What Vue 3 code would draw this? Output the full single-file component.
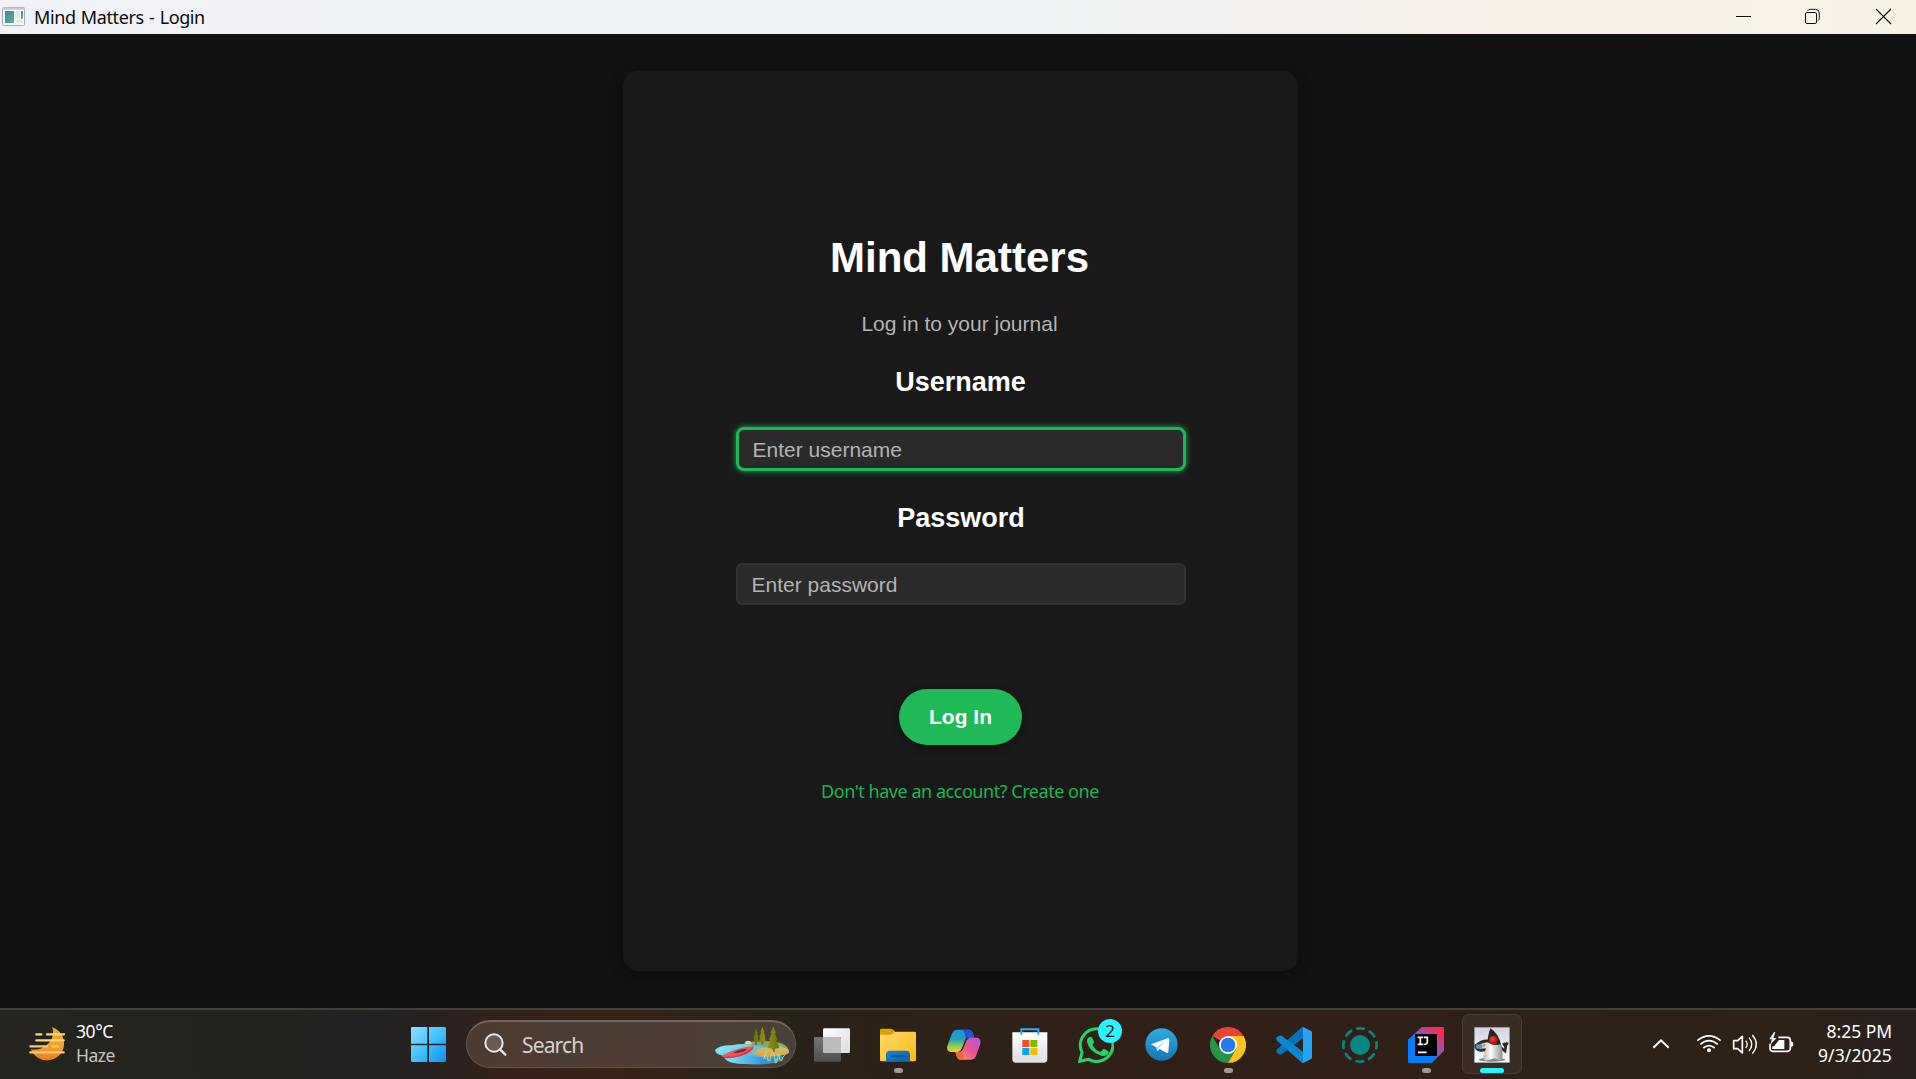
<script setup>
const title = 'Mind Matters - Login'
</script>

<template>
  <div class="screen">
    <header class="titlebar">
      <svg class="app-icon" width="23" height="19" viewBox="0 0 69 57">
        <defs><linearGradient id="ai" x1="0" y1="0" x2="1" y2="1"><stop offset="0" stop-color="#4583b0" /><stop offset="1" stop-color="#55b087" /></linearGradient></defs>
        <rect x="1.500" y="1.500" width="66" height="54" rx="3" fill="#f7f7f7" stroke="#a6adb8" stroke-width="3" />
        <path d="M2 2h65v6H2z" fill="#c3cad4" />
        <path d="M9 12h27v36H9z" fill="url(#ai)" />
        <path d="M41 12h12v22H41zM41 38h22v10H41z" fill="#e6e8e6" />
        <path d="M57 12h6v23h-6z" fill="url(#ai)" />
      </svg>
      <span class="window-title">{{ title }}</span>
      <div class="window-controls">
        <svg width="182" height="34" viewBox="0 0 546 102" fill="none" stroke="#111" stroke-width="3">
          <path d="M18 49.500h45" />
          <rect x="226.500" y="37.500" width="33" height="33" rx="4" />
          <path d="M233 32q2-4 8-4h15q12 0 12 12v13q0 7-4 9" />
          <path d="M438 27l45 45M483 27l-45 45" stroke-width="3.600" />
        </svg>
      </div>
    </header>

    <main class="workspace">
      <section class="card">
        <h1>Mind Matters</h1>
        <p class="subtitle">Log in to your journal</p>
        <div class="label user-label">Username</div>
        <div class="field focused"><span>Enter username</span></div>
        <div class="label pass-label">Password</div>
        <div class="field plain"><span>Enter password</span></div>
        <button class="login">Log In</button>
        <a class="signup">Don't have an account? Create one</a>
      </section>
    </main>

    <footer class="taskbar">
      <div class="weather">
        <svg width="36" height="34" viewBox="0 0 108 102">
          <defs><linearGradient id="sun" x1="0" y1="0" x2="0" y2="1"><stop offset="0" stop-color="#eba936" /><stop offset=".55" stop-color="#f3a52c" /><stop offset="1" stop-color="#ee7a1d" /></linearGradient></defs>
          <path d="M69 0c21 8 36 25 36 49a51 50 0 0 1-99 18c14 2 26 0 38-7 24-14 34-38 25-60z" fill="url(#sun)" />
          <g stroke="#f9d978" stroke-width="7" stroke-linecap="round"><path d="M22 22h15M54 22h51M22 40h82" /><path d="M4 58h51M71 58h15M4 76h100" stroke="#f3c777" /></g>
        </svg>
        <div class="weather-text"><span class="temp">30°C</span><span class="haze">Haze</span></div>
      </div>

      <div class="tasks">
        <div class="slot start">
          <svg width="35" height="35" viewBox="0 0 105 105">
            <defs><linearGradient id="win" gradientUnits="userSpaceOnUse" x1="0" y1="0" x2="105" y2="105"><stop offset="0" stop-color="#8ee0ff" /><stop offset=".5" stop-color="#41c3ff" /><stop offset="1" stop-color="#0a91fb" /></linearGradient></defs>
            <path d="M4 0h45v50H0V4q0-4 4-4zM54 0h47q4 0 4 4v46H54zM0 55h49v50H4q-4 0-4-4zM54 55h51v46q0 4-4 4H54z" fill="url(#win)" />
          </svg>
        </div>
        <div class="search">
          <svg width="23" height="24" viewBox="0 0 69 72" fill="none" stroke="#e8e8ea">
            <circle cx="30" cy="30" r="26" stroke-width="6" fill="#6a5a52" /><path d="M48 49l16 16" stroke-width="7" stroke-linecap="round" />
          </svg>
          <span>Search</span>
          <svg class="scene" width="76" height="40" viewBox="972 72 228 120">
            <defs>
              <linearGradient id="lake" x1="0" y1="0" x2="1" y2=".6"><stop offset="0" stop-color="#8df2f2" /><stop offset=".5" stop-color="#66c9f0" /><stop offset="1" stop-color="#2a93dd" /></linearGradient>
              <linearGradient id="lake2" x1="0" y1="0" x2="1" y2="0"><stop offset="0" stop-color="#7fe6f5" /><stop offset="1" stop-color="#2a8fd8" /></linearGradient>
              <linearGradient id="land" x1="0" y1="0" x2="0" y2="1"><stop offset="0" stop-color="#c9c56b" /><stop offset="1" stop-color="#e0a04c" /></linearGradient>
              <linearGradient id="fir"><stop offset="0" stop-color="#55700f" /><stop offset=".5" stop-color="#a8920f" /><stop offset="1" stop-color="#5c7010" /></linearGradient>
            </defs>
            <path d="M975 147q12-15 50-14 30-8 78-1l50 8 24 25q2 21-45 24-90 5-122-11-11-6 1-12-35-3-36-19z" fill="url(#lake)" />
            <path d="M1010 178q45-18 120-7-4 16-50 18-52 2-70-11z" fill="url(#lake2)" />
            <path d="M1063 128q5-12 20-6 60-5 90 5 22 7 25 27-8 9-30 8-5-22-60-27-32-1-45-7z" fill="#7fb06a" />
            <path d="M1063 127q5-11 18-6l4 7q-10 4-22-1z" fill="#cfe0b8" />
            <path d="M1088 158q10-16 43-20 35-8 64 8 5 11-8 14-20 6-37 6-26 7-62-8z" fill="url(#land)" />
            <path d="M1096 132h5v-18h-5zM1114 130h6v-20h-6zM1147 152h7v-22h-7z" fill="#8a5125" />
            <path d="M1098 82l5 14-2 1 4 12-2 1 3 12h-16l3-12-2-1 4-12-2-1zM1117 77l6 16-2 1 5 14-2 1 4 15h-22l4-15-2-1 5-14-2-1zM1150 76l8 19-3 2 8 20-4 2 9 22q-17 5-36 0l9-22-4-2 8-20-3-2z" fill="url(#fir)" />
            <path d="M997 168q-2-5 8-9 40-20 86-24 0 17-42 31-34 9-52 2z" fill="#f25457" />
            <path d="M1028 157q22-15 43-13-8 12-43 13z" fill="#6b2c3d" /><path d="M997 168q58 2 94-31-2 17-42 29-34 9-52 2z" fill="#d9303f" />
            <path d="M1121 175q3-16 10-25M1135 180q-2-15-12-28M1139 181q2-20 10-35M1156 187q0-18-8-35M1159 186q2-18 12-29M1171 180q-2-12-10-25M1174 181q4-15 12-21M1119 163l9 11M1165 172l-10 6" stroke="#c5d67e" stroke-width="3" fill="none" />
          </svg>
        </div>
        <div class="slot">
          <svg width="36" height="34" viewBox="0 0 108 102">
            <defs><linearGradient id="tv" x1="0" y1="0" x2="1" y2="1"><stop offset="0" stop-color="#fff" /><stop offset="1" stop-color="#dcdcdc" /></linearGradient><linearGradient id="tg" x1="0" y1="0" x2="0" y2="1"><stop offset="0" stop-color="#737373" /><stop offset="1" stop-color="#4f4f4f" /></linearGradient></defs>
            <rect x="27" y="1" width="81" height="74" rx="4" fill="url(#tv)" /><rect y="27" width="81" height="74" rx="4" fill="url(#tg)" /><path d="M27 27h50q4 0 4 4v44H31q-4 0-4-4z" fill="#bcbcbc" />
          </svg>
        </div>
        <div class="slot">
          <svg width="36" height="34" viewBox="0 0 108 102">
            <defs><linearGradient id="fo" x1="0" y1="0" x2="1" y2="1"><stop offset="0" stop-color="#ffdc6d" /><stop offset="1" stop-color="#fdb90d" /></linearGradient><linearGradient id="fb" x1="0" y1="0" x2="1" y2="1"><stop offset="0" stop-color="#1786d9" /><stop offset="1" stop-color="#0862ae" /></linearGradient></defs>
            <path d="M0 20V6q0-4 4-4h29q5 0 12 8v12H0z" fill="#e0a000" /><path d="M0 20h31q5 0 8-4 4-5 9-5h56q4 0 4 4v81q0 4-4 4H4q-4 0-4-4z" fill="url(#fo)" />
            <path d="M18 100V80q0-12 12-12h48q12 0 12 12v20z" fill="url(#fb)" /><path d="M34 84h40" stroke="#08498b" stroke-width="5" stroke-linecap="round" />
          </svg>
          <i class="running"></i>
        </div>
        <div class="slot">
          <svg width="34" height="31" viewBox="0 0 102 93">
            <defs>
              <linearGradient id="ca" x1="0" y1="0" x2="0" y2="1"><stop offset="0" stop-color="#1694e8" /><stop offset=".45" stop-color="#20a5b8" /><stop offset=".75" stop-color="#96ce45" /><stop offset="1" stop-color="#f1d22c" /></linearGradient>
              <linearGradient id="cb" x1="1" y1="0" x2="0" y2="1"><stop offset="0" stop-color="#a858ed" /><stop offset=".5" stop-color="#eb5493" /><stop offset="1" stop-color="#ffa05c" /></linearGradient>
            </defs>
            <path d="M30 2h36q9 0 13 15l3 9H67q-10 0-14 12l-7 20q-4 11-16 11H14Q-3 69 1 51L14 16Q19 2 30 2z" fill="url(#ca)" />
            <path d="M46 2h20q9 0 13 15l3 9H67q-9 0-13 11 4-24-8-35z" fill="#2054cf" />
            <path d="M72 92H40q-9 0-12-14l-3-9h8q11 0 15-12l8-20q4-11 14-11h19q14 1 11 18L88 78q-4 14-16 14z" fill="url(#cb)" />
            <path d="M25 69h10q9 0 13-10-3 22 7 33H40q-9 0-12-14z" fill="#f36643" />
            <path d="M45 57l8-21q4-10 14-10-8 5-11 14l-8 20q-4 9-15 9 9-3 12-12z" fill="#2d2118" />
          </svg>
        </div>
        <div class="slot">
          <svg width="36" height="36" viewBox="0 0 108 108">
            <defs><linearGradient id="st" x1="0" y1="0" x2="0" y2="1"><stop offset="0" stop-color="#fff" /><stop offset="1" stop-color="#dedee1" /></linearGradient></defs>
            <path d="M1 16h105v80q0 11-11 11H12Q1 107 1 96z" fill="url(#st)" /><path d="M28 23V7h51v16" stroke="#29b2ef" stroke-width="6" fill="none" />
            <path d="M31 39h21v21H31z" fill="#f25022" /><path d="M55 39h21v21H55z" fill="#7fba00" /><path d="M31 63h21v21H31z" fill="#00a4ef" /><path d="M55 63h21v21H55z" fill="#ffb900" />
          </svg>
        </div>
        <div class="slot">
          <svg width="36" height="36" viewBox="0 0 108 108">
            <path d="M5 103l7-27A49 49 0 1 1 32 97z" fill="none" stroke="#25d366" stroke-width="9" />
            <path d="M35 30q5-2 8 3l5 11q1 3-5 9 8 16 25 22l7-8q3-2 6 0l10 6q3 2-1 8-7 9-20 5-37-12-43-42-1-10 8-14z" fill="#25d366" />
          </svg>
          <b class="badge">2</b>
        </div>
        <div class="slot tele">
          <svg width="33" height="33" viewBox="0 0 99 99">
            <defs><linearGradient id="te" x1="0" y1="0" x2="0" y2="1"><stop offset="0" stop-color="#2fabe5" /><stop offset="1" stop-color="#1278b5" /></linearGradient></defs>
            <circle cx="49.500" cy="49.500" r="48.500" fill="url(#te)" /><path d="M18 49l50-18q6-2 5 5l-3 36q-2 5-6 2L44 63l-7 7-3-12z" fill="#fff" /><path d="M34 58l28-19-21 22-4 9z" fill="#bad9e9" />
          </svg>
        </div>
        <div class="slot">
          <svg width="36" height="36" viewBox="0 0 108 108">
            <path d="M54 54L7.200 27A54 54 0 0 1 100.800 27z" fill="#e94335" /><path d="M7.200 27A54 54 0 0 0 54 108L77.400 67.500 54 54 30.600 67.500z" fill="#279344" /><path d="M54 27h46.800A54 54 0 0 1 54 108l23.400-40.500z" fill="#fcc31e" /><circle cx="54" cy="54" r="27" fill="#fff" /><circle cx="54" cy="54" r="22" fill="#2c78ef" />
          </svg>
          <i class="running"></i>
        </div>
        <div class="slot">
          <svg width="36" height="36" viewBox="0 0 108 108">
            <path d="M3 67q-5 6 0 11l6 4q5 2 9-1l64-48V2q-3-3-7 1z" fill="#0873ba" />
            <path d="M3 41q-5-6 0-11l6-4q5-2 9 1l64 48v30q-3 3-7 0z" fill="#0d86d0" /><path d="M78 1q2-2 5 0l21 10q4 2 4 6v74q0 4-4 6l-21 10q-3 2-6 0 4-1 4-6V7q0-5-3-6z" fill="#25a4f2" />
          </svg>
        </div>
        <div class="slot">
          <svg width="36" height="36" viewBox="0 0 108 108"><circle cx="54" cy="54" r="30" fill="#058781" /><circle cx="54" cy="54" r="50" fill="none" stroke="#058781" stroke-width="8" stroke-linecap="round" stroke-dasharray="20 19.270" stroke-dashoffset="10" /></svg>
        </div>
        <div class="slot">
          <svg width="36" height="36" viewBox="0 0 108 108">
            <defs><linearGradient id="ij" x1="1" y1="0" x2="0" y2="1"><stop offset=".12" stop-color="#ff2857" /><stop offset=".48" stop-color="#7660c8" /><stop offset=".56" stop-color="#087cff" /></linearGradient></defs>
            <path d="M43 0h61q4 0 4 4v67l-37 37H4q-4 0-4-4V41q0-4 3-6L39 2q2-2 4-2z" fill="url(#ij)" /><path d="M21 21h66v66H21z" fill="#000" />
            <path d="M29 31h16M29 52h16M37 31v21M47 31h11v14q0 8-11 7M30 76h26" fill="none" stroke="#fff" stroke-width="5" />
          </svg>
          <i class="running"></i>
        </div>
        <div class="slot active">
          <svg width="36" height="36" viewBox="0 0 108 108">
            <defs><linearGradient id="du" x1="0" y1="0" x2="0" y2="1"><stop offset="0" stop-color="#d3d3df" /><stop offset=".8" stop-color="#f6f6f8" /></linearGradient><radialGradient id="nose" cx=".4" cy=".35"><stop offset="0" stop-color="#f8473f" /><stop offset="1" stop-color="#b51218" /></radialGradient><linearGradient id="belly"><stop offset="0" stop-color="#b9b9b6" /><stop offset=".4" stop-color="#fff" /><stop offset="1" stop-color="#8e8e8c" /></linearGradient></defs>
            <rect x="1" y="1" width="106" height="106" rx="3" fill="url(#du)" stroke="#7a93a6" stroke-width="2" />
            <ellipse cx="54" cy="98" rx="39" ry="6" fill="#85858c" />
            <path d="M42 42Q24 40 6 56q0 11 14 14l17-2" fill="none" stroke="#2c2c2c" stroke-width="9" /><path d="M6 52h19v13H6z" fill="#5b8fbd" /><path d="M27 48l10 4-6 10-8-3z" fill="#c2a779" />
            <path d="M78 60l15 12 4-24M88 48l6 10 7-12" fill="none" stroke="#2c2c2c" stroke-width="8" />
            <path d="M40 50Q42 22 49 4q26 16 33 52l-20 8z" fill="#262626" />
            <path d="M40 46q20 12 39 6 8 15 7 32-1 15-6 18l-18-8-26 7Q23 98 30 80q8-18 10-34z" fill="url(#belly)" />
            <circle cx="58" cy="40" r="13" fill="url(#nose)" />
          </svg>
          <i class="current"></i>
        </div>
      </div>

      <div class="tray">
        <svg width="142" height="24" viewBox="96 92 426 72" fill="none" stroke="#fff" stroke-width="5">
          <path d="M100 142l23-22 23 22" stroke-width="6" />
          <path d="M232 121q35-29 70 0M241 132q26-22 52 0M250 143q17-14 34 0" /><circle cx="267" cy="150" r="6" fill="#fff" stroke="none" />
          <path d="M341 121h12l14-13v50l-14-13h-12z" stroke-linejoin="round" /><path d="M377 121q10 11 0 22M387 112q17 20 0 40M397 104q24 28 0 56" stroke-width="4" />
          <path d="M475 111h27q9 0 9 9v24q0 9-9 9h-44q-8 0-8-9v-14" /><path d="M477 119h16v27h-36v-8h5z" fill="#fff" stroke="none" /><path d="M512 124h4q4 1 4 8t-4 7h-4z" fill="#fff" stroke="none" /><path d="M462 96l-14 21h8l-6 18 19-22h-9l6-17z" fill="#fff" stroke="none" />
        </svg>
        <div class="clock"><span class="time">8:25 PM</span><span class="date">9/3/2025</span></div>
      </div>
    </footer>
  </div>
</template>

<style>
body { margin: 0; background: #121212; overflow: hidden; }
</style>

<style scoped>
* { box-sizing: border-box; }
.screen { width: 1916px; height: 1079px; display: flex; flex-direction: column; font-family: "Noto Sans", sans-serif; background: #121212; }
svg { display: block; flex: none; }
.titlebar { height: 34px; flex: none; display: flex; align-items: flex-start; background: linear-gradient(90deg, #f0f2f8 0%, #f0f3f5 18%, #eef3f5 55%, #f4f0ed 66%, #f9f0e8 78%, #f8f2e5 100%); }
.app-icon { margin: 7px 0 0 2px; }
.window-title { margin-left: 9px; font-size: 18px; line-height: 26px; margin-top: 4px; color: #0b0b0b; letter-spacing: -.4px; word-spacing: 1px; white-space: nowrap; }
.window-controls { margin-left: auto; margin-right: 4px; }
.workspace { flex: 1; display: flex; justify-content: center; padding: 37px 0 0 5px; }
.card { width: 675px; height: 900px; padding-top: 163px; border-radius: 15px; background: #191919; box-shadow: 0 3px 14px rgba(0,0,0,.32); display: flex; flex-direction: column; align-items: center; font-family: "Liberation Sans", Arial, sans-serif; }
h1 { margin: 0 2px 0 0; font-size: 42px; line-height: 48px; color: #fff; }
.subtitle { margin: 30px 2px 0 0; font-size: 21px; line-height: 24px; color: #b3b3b3; }
.label { font-size: 27px; line-height: 30px; font-weight: 700; color: #fff; }
.user-label { margin-top: 31px; }
.pass-label { margin: 32px 0 0 1px; }
.field { width: 450px; display: flex; align-items: center; background: #2a2a2a; color: #b3b3b3; font-size: 21px; line-height: 24px; }
.focused { height: 44px; margin-top: 30px; border: 3px solid #1db954; border-radius: 8px; padding: 2px 0 0 14px; box-shadow: 0 0 5px 1px rgba(29,185,84,.7); }
.plain { height: 42px; margin-top: 30px; border: 2px solid #333; border-radius: 6px; padding: 2px 0 0 14px; }
.login { width: 123px; height: 56px; margin-top: 84px; padding: 0; border: 0; border-radius: 28px; background: #1fba56; color: #fff; font: 700 21px/24px "Liberation Sans", Arial, sans-serif; box-shadow: 0 3px 8px rgba(0,0,0,.3); }
.signup { margin: 33px 1px 0 0; font: 18px/26px "Noto Sans", sans-serif; color: #1eb454; letter-spacing: -.46px; white-space: nowrap; }
.taskbar { height: 71px; flex: none; border-top: 2px solid #454039; display: flex; align-items: flex-start; background: linear-gradient(90deg, #25241f 0%, #25231e 12%, #232122 21%, #34211a 26%, #382317 32%, #30241a 36%, #282219 41%, #2c2119 46%, #302118 55%, #302018 72%, #2d2118 80%, #2d2217 94%, #292020 100%); }
.weather { width: 395px; display: flex; padding: 17px 0 0 29px; }
.weather-text { display: flex; flex-direction: column; margin-left: 11px; margin-top: -8px; font-size: 17.500px; line-height: 24px; letter-spacing: -.4px; }
.temp { color: #fff; }
.haze { color: #c8c6c3; letter-spacing: -.5px; }
.tasks { display: flex; align-items: flex-start; }
.slot { position: relative; width: 66px; height: 69px; display: flex; align-items: center; justify-content: center; }
.start { width: 67px; margin-right: 4px; }
.search { width: 330px; height: 48px; margin: 10px 3px 0 0; padding-left: 17px; border-radius: 24px; border: 1px solid #62564d; border-top: 2px solid #71655d; background: linear-gradient(90deg, #4d3b32, #4e3d34 50%, #4a4138); display: flex; align-items: center; color: #d8d2ce; font-size: 21px; }
.search span { margin-left: 15px; letter-spacing: -.85px; }
.scene { margin-left: auto; margin-right: 5px; }
.tele { padding-right: 1px; }
.running { position: absolute; width: 9px; height: 5px; border-radius: 3px; background: #a19892; bottom: 6px; left: 29px; }
.badge { position: absolute; width: 24px; height: 24px; border-radius: 50%; left: 35px; top: 9px; background: #28f4ff; color: #111; font-weight: 400; font-size: 17px; line-height: 24px; text-align: center; }
.active::before { content: ""; position: absolute; inset: 4px 3px 5px; border-radius: 7px; background: rgba(255,255,255,.055); border: 1px solid rgba(255,255,255,.07); }
.active svg { position: relative; }
.current { position: absolute; width: 24px; height: 5px; border-radius: 3px; left: 21px; bottom: 6px; background: #29f3ff; }
.tray { margin-left: auto; padding-right: 24px; display: flex; align-items: flex-start; }
.tray > svg { margin-top: 21px; }
.clock { width: 98px; display: flex; flex-direction: column; align-items: flex-end; margin-top: 9px; color: #fff; font-size: 17.500px; line-height: 24px; white-space: nowrap; }
.time { letter-spacing: -.05px; }
.date { letter-spacing: .12px; }
</style>
